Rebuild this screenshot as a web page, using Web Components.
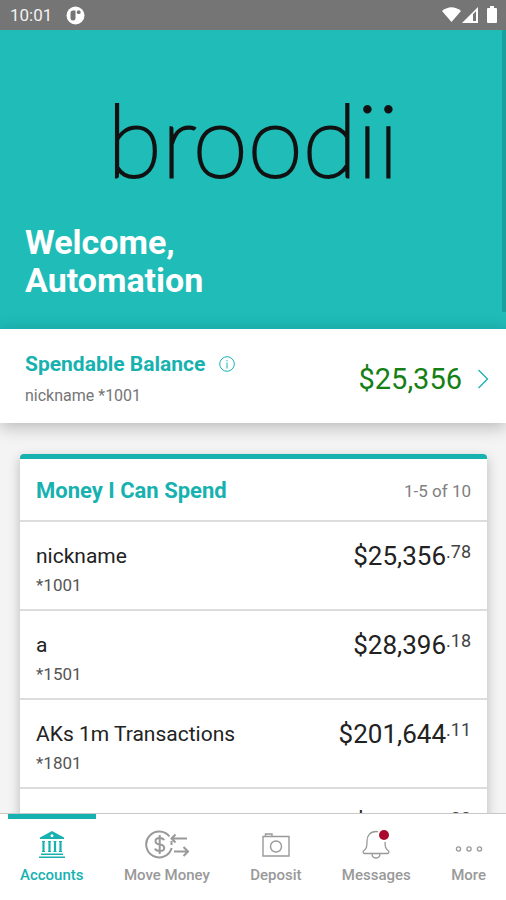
<!DOCTYPE html>
<html lang="en">
<head>
<meta charset="utf-8">
<meta name="viewport" content="width=device-width, initial-scale=1">
<title>broodii – Accounts</title>
<style>
  html, body { margin: 0; height: 100%; }
  body {
    --brand: #1fbcb8;
    --accent: #17b2b0;
    --line: #dcdcdc;
    font-family: Roboto, "Liberation Sans", sans-serif;
    color: #222;
    background: #f4f4f4;
  }
</style>
</head>
<body>
<bank-app>
  <status-bar slot="status" time="10:01"></status-bar>
  <welcome-hero brand="broodii"><span>Welcome,</span><span>Automation</span></welcome-hero>
  <balance-banner amount="$25,356"><span slot="title">Spendable Balance</span><span slot="account">nickname *1001</span></balance-banner>
  <account-card>
    <span slot="title">Money I Can Spend</span>
    <span slot="range">1-5 of 10</span>
    <account-row name="nickname" number="*1001" amount="$25,356" cents=".78"></account-row>
    <account-row name="a" number="*1501" amount="$28,396" cents=".18"></account-row>
    <account-row name="AKs 1m Transactions" number="*1801" amount="$201,644" cents=".11"></account-row>
    <account-row name="" number="" amount="$25,356" cents=".00"></account-row>
  </account-card>
  <tab-bar slot="tabs">
    <tab-item icon="bank" active>Accounts</tab-item>
    <tab-item icon="move">Move Money</tab-item>
    <tab-item icon="camera">Deposit</tab-item>
    <tab-item icon="bell" badge>Messages</tab-item>
    <tab-item icon="more">More</tab-item>
  </tab-bar>
</bank-app>

<script>
class Base extends HTMLElement {
  constructor() {
    super();
    this.attachShadow({ mode: "open" });
  }
  connectedCallback() { this.shadowRoot.innerHTML = this.render(); }
  attr(name) { return this.getAttribute(name) || ""; }
}

customElements.define("bank-app", class extends Base {
  render() {
    return `<style>
      :host { display: flex; flex-direction: column; height: 100vh; overflow: hidden; }
      .view { position: relative; flex: 1; min-height: 0; display: flex; flex-direction: column; }
      main { flex: 1; min-height: 0; overflow-y: auto; scrollbar-width: none; }
      .thumb { position: absolute; top: 0; right: 0; width: 4px; height: 36%; background: rgba(0,0,0,.14); }
    </style>
    <slot name="status"></slot>
    <div class="view"><main><slot></slot></main><div class="thumb"></div></div>
    <slot name="tabs"></slot>`;
  }
});

customElements.define("status-bar", class extends Base {
  render() {
    return `<style>
      :host { display: flex; align-items: center; justify-content: space-between; height: 30px; padding: 0 9px 0 10px; background: #757575; color: #f2f2f2; font-size: 17px; line-height: 20px; flex: none; }
      div { display: flex; align-items: center; gap: 14px; }
      svg { display: block; }
    </style>
    <div><span>${this.attr("time")}</span>
      <svg width="19" height="19" viewBox="0 0 19 19" aria-hidden="true"><circle cx="9.500" cy="9.500" r="9" fill="#fff"/><path d="M4.500 7Q4.500 4.500 7 4.500H9.500V12.500Q9.500 14.500 7 14.500T4.500 12Z" fill="#757575"/><circle cx="12.700" cy="6.200" r="1.900" fill="#757575"/></svg>
    </div>
    <div>
      <svg width="55" height="18" viewBox="0 0 55 18" aria-hidden="true" fill="#fff"><path d="M0 5Q9.500-2.500 19 5L9.500 16Z"/><path fill-rule="evenodd" d="M20 17 36 1V17ZM31 8.200V15H34V5.200Z"/><path d="M46 2h2V0h4v2h2q1 0 1 1v13q0 1-1 1h-8q-1 0-1-1V3q0-1 1-1z"/></svg>
    </div>`;
  }
});

customElements.define("welcome-hero", class extends Base {
  render() {
    return `<style>
      :host { display: flex; flex-direction: column; gap: 33px; padding: 56px 25px 29px; background: var(--brand); color: #fff; }
      .logo { align-self: center; font: 200 100px/104px Lato, sans-serif; color: #111; -webkit-text-stroke: 3px #111; }
      h1 { margin: 0; font-size: 34px; font-weight: 700; line-height: 38px; }
      ::slotted(span) { display: block; }
    </style>
    <div class="logo">${this.attr("brand")}</div>
    <h1><slot></slot></h1>`;
  }
});

customElements.define("balance-banner", class extends Base {
  render() {
    return `<style>
      :host { position: relative; display: flex; align-items: center; justify-content: space-between; padding: 21px 17px 16px 25px; background: #fff; box-shadow: 0 4px 16px rgba(0,0,0,.25); border-top: 1px solid var(--accent); }
      .label { display: flex; flex-direction: column; gap: 7px; }
      h2 { margin: 0; display: flex; align-items: center; gap: 14px; font-size: 21px; line-height: 28px; font-weight: 700; color: var(--accent); }
      .account { font-size: 16px; line-height: 22px; color: #757575; }
      button { border: 0; padding: 0; background: none; font: inherit; color: inherit; cursor: pointer; }
      svg { display: block; fill: none; stroke: var(--accent); }
      .amount { display: flex; align-items: center; gap: 15px; color: #168016; font-size: 29px; line-height: 36px; }
    </style>
    <div class="label">
      <h2><slot name="title"></slot>
        <button aria-label="About this balance"><svg width="16" height="16" viewBox="0 0 16 16"><circle cx="8" cy="8" r="7.300"/><path d="M8 6.500v6M8 4v1.300"/></svg></button></h2>
      <div class="account"><slot name="account"></slot></div>
    </div>
    <button class="amount"><span>${this.attr("amount")}</span>
      <svg width="12" height="20" viewBox="0 0 12 20" stroke-width="1.300" aria-hidden="true"><path d="m1.500 1 9 9-9 9"/></svg></button>`;
  }
});

customElements.define("account-card", class extends Base {
  render() {
    return `<style>
      :host { display: block; margin: 31px 19px 31px 20px; background: #fff; border-top: 5px solid var(--accent); border-radius: 4px; box-shadow: 0 4px 12px rgba(0,0,0,.25); }
      header { display: flex; align-items: center; justify-content: space-between; padding: 17px 16px 14px; }
      h2 { margin: 0; font-size: 22px; line-height: 30px; font-weight: 700; color: var(--accent); }
      .range { font-size: 17px; line-height: 30px; color: #808080; }
    </style>
    <header><h2><slot name="title"></slot></h2><div class="range"><slot name="range"></slot></div></header>
    <slot></slot>`;
  }
});

customElements.define("account-row", class extends Base {
  render() {
    return `<style>
      :host { display: flex; justify-content: space-between; padding: 17px 16px 12px; border-top: 2px solid var(--line); }
      .name { font-size: 21px; line-height: 34px; }
      .number { font-size: 17px; line-height: 24px; color: #555; }
      .amount { display: flex; align-items: flex-start; font-size: 26px; line-height: 34px; }
      .cents { font-size: 18px; line-height: 26px; color: #444; }
    </style>
    <div><div class="name">${this.attr("name")}</div><div class="number">${this.attr("number")}</div></div>
    <div class="amount"><span>${this.attr("amount")}</span><span class="cents">${this.attr("cents")}</span></div>`;
  }
});

customElements.define("tab-bar", class extends Base {
  render() {
    return `<style>
      :host { display: block; flex: none; background: #fff; border-top: 1px solid #c8c8c8; }
      nav { display: flex; justify-content: space-between; padding: 0 8px; }
    </style><nav aria-label="Main"><slot></slot></nav>`;
  }
});

const ICONS = {
  bank: `<svg width="28" height="30" viewBox="0 0 28 30" fill="currentColor"><path fill-rule="evenodd" d="M2 9V7.500L14 1l12 6.500V9ZM14 4.300a1.500 1.500 0 1 0 .01 0Z"/><path d="M4 11h3v1H6.600v9H7v1H4v-1h.4v-9H4ZM10 11h3v1h-.4v9h.4v1h-3v-1h.4v-9H10ZM15.500 11h3v1h-.4v9h.4v1h-3v-1h.4v-9h-.4ZM21 11h3v1h-.4v9h.4v1h-3v-1h.4v-9H21ZM3 23.500h22V25H3ZM1 26.500h26V28H1Z"/></svg>`,
  move: `<svg width="44" height="30" viewBox="0 0 44 30" fill="none" stroke="currentColor" stroke-width="2"><path d="M24.500 6.500A13 13 0 1 0 26.700 18M26.500 11v4"/><path d="M19 10.200Q18.300 8 14.700 8 10.500 8 10.500 11T14.700 14.500Q19.200 15 19.200 18T14.700 21Q10.800 21 10 18.500M14.700 5v19M42 8.500H26.500M30.500 4.500l-4 4 4 4M29 21.500H43M38.500 17l4.500 4.500-4.500 4.500"/></svg>`,
  camera: `<svg width="28" height="30" viewBox="0 0 28 30" fill="none" stroke="currentColor" stroke-width="1.400"><path d="M1 6.500H27V26H1ZM3.500 6.500V4H10V6.500"/><circle cx="14" cy="16.500" r="5.500"/></svg>`,
  bell: `<svg width="28" height="30" viewBox="0 0 28 30" fill="none" stroke="currentColor" stroke-width="1.300"><path d="M14 1.500C8 1.500 5 6 5 11c0 6-.5 7.500-3 9.500-1.200 1-1.200 3 .5 3h23c1.700 0 1.700-2 .5-3-2.500-2-3-3.500-3-9.500 0-5-3-9.500-9-9.500ZM10 23.500c0 6 8 6 8 0"/></svg>`,
  more: `<svg width="28" height="30" viewBox="0 0 28 30" fill="none" stroke="currentColor" stroke-width="1.300"><circle cx="3.500" cy="19" r="2.100"/><circle cx="14" cy="19" r="2.100"/><circle cx="24.500" cy="19" r="2.100"/></svg>`
};

customElements.define("tab-item", class extends Base {
  render() {
    const active = this.hasAttribute("active");
    return `<style>
      :host { display: block; color: #999; }
      :host([active]) { color: var(--accent); }
      button { display: flex; flex-direction: column; align-items: center; gap: 5px; border: 0; border-top: 5px solid transparent; padding: 11px 12px 15px; background: none; color: inherit; font: 500 15px/20px Roboto, "Liberation Sans", sans-serif; cursor: pointer; }
      :host([active]) button { border-top-color: var(--accent); }
      .icon { position: relative; }
      svg { display: block; }
      i { position: absolute; top: 0; right: 1px; width: 10px; height: 10px; border-radius: 50%; background: #a90a2e; box-shadow: 0 0 0 2px #fff; }
    </style>
    <button${active ? ' aria-current="page"' : ""}><span class="icon" aria-hidden="true">${ICONS[this.attr("icon")]}${this.hasAttribute("badge") ? "<i></i>" : ""}</span><slot></slot></button>`;
  }
});
</script>
</body>
</html>
